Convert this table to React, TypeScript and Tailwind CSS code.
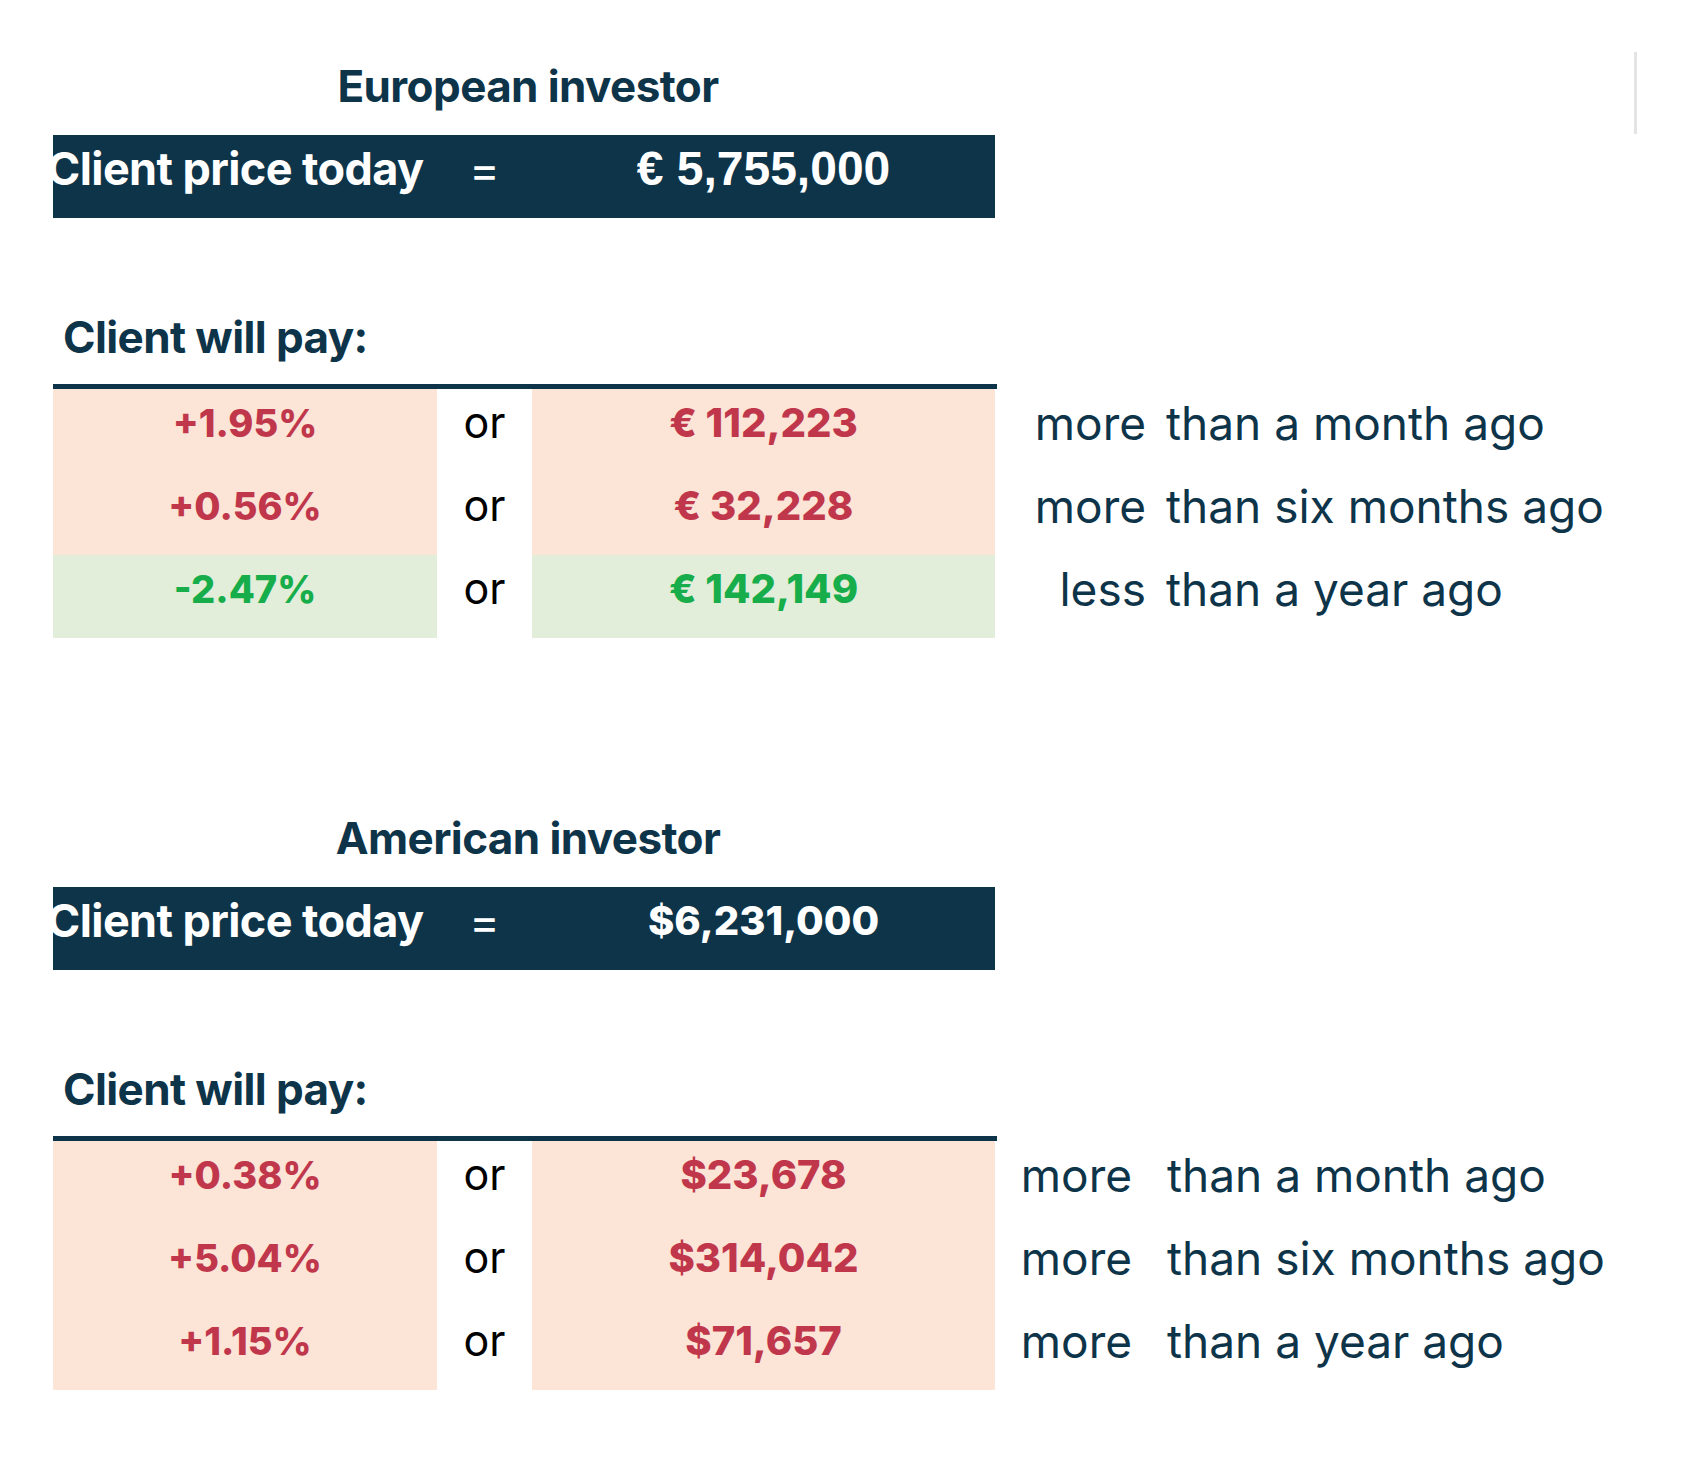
import React from "react";

type Row = { pct: string; amt: string; word: string; rest: string; good?: boolean };

const NAVY = "text-[#0e3449]";

function Section({
  title,
  price,
  priceArial,
  rows,
  wordW,
  gap,
}: {
  title: string;
  price: string;
  priceArial?: boolean;
  rows: Row[];
  wordW: string;
  gap: string;
}) {
  return (
    <div className="h-[752px] flex flex-col">
      <div className="h-[135px] w-[942px] flex items-center justify-center pt-[36px] pl-[8px]">
        <div className={`${NAVY} text-[44px] font-bold tracking-[-0.6px] leading-none`}>{title}</div>
      </div>
      <div className="h-[83px] w-[942px] bg-[#0e3449] grid grid-cols-[384px_95px_463px] items-center overflow-hidden text-white pb-[16px]">
        <div className="text-[45px] font-bold tracking-[-0.6px] leading-none whitespace-nowrap ml-[-6px]">
          Client price today
        </div>
        <div className="text-[46px] leading-none text-center">=</div>
        <div
          className={`text-center leading-none ${
            priceArial
              ? "text-[48px] font-bold font-['Liberation_Sans',Arial,sans-serif]"
              : "text-[40px] font-extrabold"
          }`}
        >
          {price}
        </div>
      </div>
      <div className="h-[166px] flex items-end pb-[25px] pl-[10px]">
        <div className={`${NAVY} text-[44px] font-bold tracking-[-0.6px] leading-none`}>Client will pay:</div>
      </div>
      <div className="flex">
        <div className="w-[944px] border-t-[5px] border-[#0e3449]">
          {rows.map((r, i) => {
            const tone = r.good ? "bg-[#e2eed9] text-[#17ad4b]" : "bg-[#fce4d7] text-[#c0374c]";
            return (
              <div key={i} className="grid grid-cols-[384px_95px_463px] h-[83px]">
                <div
                  className={`flex items-center justify-center pb-[16px] text-[38px] font-extrabold leading-none ${tone}`}
                >
                  {r.pct}
                </div>
                <div className="flex items-center justify-center pb-[16px] text-[43px] leading-none text-black">
                  or
                </div>
                <div
                  className={`flex items-center justify-center pb-[16px] text-[40px] font-extrabold leading-none ${tone}`}
                >
                  {r.amt}
                </div>
              </div>
            );
          })}
        </div>
        <div className="pt-[5px]">
          {rows.map((r, i) => (
            <div
              key={i}
              className={`h-[83px] flex items-center pb-[16px] ${NAVY} text-[46px] leading-none whitespace-nowrap`}
            >
              <div className={`${wordW} text-right`}>{r.word}</div>
              <div className={gap}>{r.rest}</div>
            </div>
          ))}
        </div>
      </div>
    </div>
  );
}

export default function App() {
  return (
    <div className="relative w-[1684px] h-[1460px] bg-white font-['Inter','Noto_Sans',sans-serif] pl-[53px]">
      <div className="absolute left-[1634px] top-[52px] w-[3px] h-[82px] bg-[#e4e4e4]" />
      <Section
        title="European investor"
        price="€ 5,755,000"
        priceArial
        wordW="w-[149px]"
        gap="pl-[20px]"
        rows={[
          { pct: "+1.95%", amt: "€ 112,223", word: "more", rest: "than a month ago" },
          { pct: "+0.56%", amt: "€ 32,228", word: "more", rest: "than six months ago" },
          { pct: "-2.47%", amt: "€ 142,149", word: "less", rest: "than a year ago", good: true },
        ]}
      />
      <Section
        title="American investor"
        price="$6,231,000"
        wordW="w-[135px]"
        gap="pl-[35px]"
        rows={[
          { pct: "+0.38%", amt: "$23,678", word: "more", rest: "than a month ago" },
          { pct: "+5.04%", amt: "$314,042", word: "more", rest: "than six months ago" },
          { pct: "+1.15%", amt: "$71,657", word: "more", rest: "than a year ago" },
        ]}
      />
    </div>
  );
}
